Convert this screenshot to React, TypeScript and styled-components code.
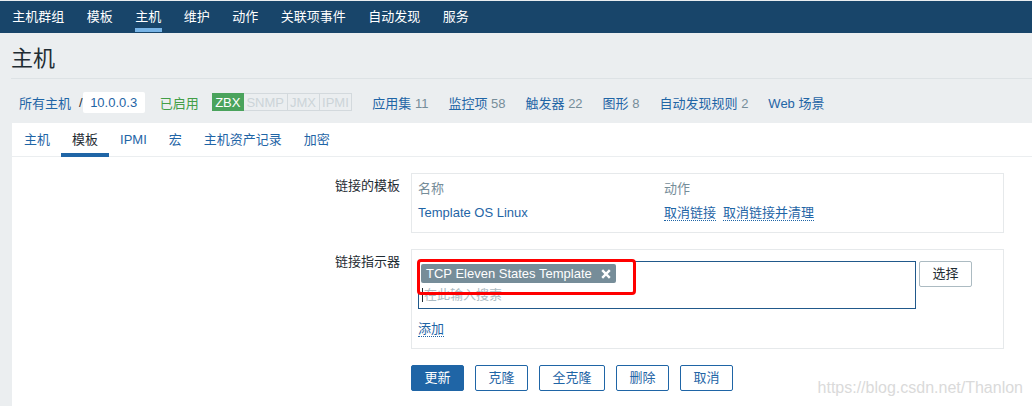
import React from 'react'
import styled, { createGlobalStyle } from 'styled-components'

const GlobalStyle = createGlobalStyle`
  body {
    margin: 0;
    background: #ebeef0;
    font-family: "Liberation Sans", Arial, "Noto Sans CJK SC", sans-serif;
    font-size: 13px;
    color: #1f2c33;
  }
  * { box-sizing: border-box; }
`

const Page = styled.div`
  position: relative;
  overflow: hidden;
`

const TopNav = styled.nav`
  display: flex;
  height: 33px;
  border-top: 1px solid #e9edf0;
  background: #18456a;
  padding-left: 1px;
`

const NavItem = styled.a<{ $active?: boolean }>`
  position: relative;
  padding: 0 11.25px;
  line-height: 32px;
  color: #fff;
  text-decoration: none;

  &::after {
    content: '';
    display: ${p => (p.$active ? 'block' : 'none')};
    position: absolute;
    left: 11px;
    right: 11px;
    bottom: 1px;
    height: 4px;
    background: #78b4e6;
  }
`

const Header = styled.header`
  margin-left: 11px;
  padding: 13px 0 6px;
  border-bottom: 1px solid #dde2e5;
`

const Title = styled.h1`
  margin: 0;
  font-size: 22px;
  font-weight: normal;
  line-height: 26px;
  color: #1f2c33;
`

const HostNav = styled.div`
  display: flex;
  align-items: center;
  height: 44px;
  padding: 2px 0 0 19px;
`

const Link = styled.a`
  color: #1f65a6;
  text-decoration: none;
  white-space: nowrap;
`

const Sep = styled.span`
  margin-left: 8px;
  color: #1f2c33;
`

const Current = styled.span`
  background: #fff;
  padding: 0 7.5px;
  line-height: 21px;
  border-radius: 2px;
  color: #1f65a6;
`

const Enabled = styled.span`
  margin-left: 15px;
  color: #429e47;
`

const Statuses = styled.div`
  display: flex;
  margin-left: 13px;
`

const Status = styled.span<{ $on?: boolean }>`
  padding: 1px 2.5px 0;
  line-height: 15px;
  border: 1px solid ${p => (p.$on ? '#4aa35c' : '#d3d9dd')};
  background: ${p => (p.$on ? '#4aa35c' : 'transparent')};
  color: ${p => (p.$on ? '#fff' : '#ccd4d8')};
  & + & {
    border-left: none;
  }
`

const HostLink = styled.span`
  margin-left: 20px;
`

const Count = styled.span`
  color: #768d99;
`

const Content = styled.main`
  margin-left: 12px;
  background: #fff;
  padding-bottom: 15px;
`

const Tabs = styled.div`
  display: flex;
  padding-left: 1px;
  border-bottom: 1px solid #ebeef0;
`

const Tab = styled.a<{ $active?: boolean }>`
  position: relative;
  padding: 0 11px;
  line-height: 33px;
  color: ${p => (p.$active ? '#1f2c33' : '#1f65a6')};
  text-decoration: none;

  &::after {
    content: '';
    display: ${p => (p.$active ? 'block' : 'none')};
    position: absolute;
    left: 0;
    right: 0;
    bottom: -1px;
    height: 4px;
    background: #1f65a6;
  }
`

const Form = styled.div`
  display: grid;
  grid-template-columns: 388px 593px;
  column-gap: 11px;
  row-gap: 16px;
  padding-top: 16px;
`

const Label = styled.label`
  text-align: right;
  padding-top: 5px;
  line-height: 16px;
`

const FieldBox = styled.div<{ $pad: string }>`
  border: 1px solid #e6e9eb;
  padding: ${p => p.$pad};
`

const LinkedTable = styled.div`
  display: grid;
  grid-template-columns: 246px auto;
  line-height: 24px;
`

const Th = styled.div`
  color: #768d99;
`

const Action = styled.a`
  color: #1f65a6;
  text-decoration: none;
  border-bottom: 1px dotted #1f65a6;
  margin-right: 7px;
`

const SelectRow = styled.div`
  display: flex;
  align-items: flex-start;
  gap: 3px;
`

const Multiselect = styled.div`
  position: relative;
  width: 498px;
  height: 48px;
  border: 1px solid #21598b;
  padding: 2px;
`

const Chip = styled.span`
  display: inline-flex;
  align-items: center;
  height: 19px;
  padding: 0 5px;
  border-radius: 2px;
  background: #768d99;
  color: #fff;
  line-height: 19px;

  & svg {
    margin-left: 9px;
  }
`

const Search = styled.div`
  display: flex;
  align-items: center;
  margin-top: 3px;
  padding-left: 1px;
  line-height: 18px;
  color: #acbbc2;

  &::before {
    content: '';
    width: 1px;
    height: 14px;
    margin-right: 1px;
    background: #1f2c33;
  }
`

const Highlight = styled.div`
  position: absolute;
  left: -2px;
  top: -3px;
  width: 219px;
  height: 36px;
  border: 3px solid #ff0000;
  border-radius: 4px;
  pointer-events: none;
`

const Button = styled.button<{ $variant?: 'main' | 'alt' | 'grey' }>`
  height: 26px;
  padding: 0 12.5px;
  border-radius: 2px;
  font: inherit;
  line-height: 24px;
  cursor: pointer;
  border: 1px solid ${p => (p.$variant === 'grey' ? '#acbbc2' : '#1f65a6')};
  background: ${p => (p.$variant === 'main' ? '#1f65a6' : '#fff')};
  color: ${p =>
    p.$variant === 'main' ? '#fff' : p.$variant === 'grey' ? '#1f2c33' : '#1f65a6'};
`

const AddRow = styled.div`
  margin-top: 8px;
  line-height: 24px;
`

const Buttons = styled.div`
  grid-column: 2;
  display: flex;
  gap: 11px;
`

const Watermark = styled.div`
  position: absolute;
  right: 9px;
  bottom: 9px;
  font-size: 16px;
  line-height: 18px;
  color: #dadada;
  pointer-events: none;
`

const topItems = ['主机群组', '模板', '主机', '维护', '动作', '关联项事件', '自动发现', '服务']
const hostLinks: [string, string][] = [
  ['应用集', '11'],
  ['监控项', '58'],
  ['触发器', '22'],
  ['图形', '8'],
  ['自动发现规则', '2'],
  ['Web 场景', ''],
]
const tabs = ['主机', '模板', 'IPMI', '宏', '主机资产记录', '加密']

const CloseIcon = () => (
  <svg width="10" height="10" viewBox="0 0 10 10">
    <path d="M1.2 1.2 L8.8 8.8 M8.8 1.2 L1.2 8.8" stroke="#fff" strokeWidth="2.4" />
  </svg>
)

export default function App() {
  return (
    <Page>
      <GlobalStyle />
      <TopNav>
        {topItems.map(t => (
          <NavItem key={t} $active={t === '主机'}>{t}</NavItem>
        ))}
      </TopNav>

      <Header>
        <Title>主机</Title>
      </Header>

      <HostNav>
        <Link>所有主机</Link>
        <Sep>/</Sep>
        <Current>10.0.0.3</Current>
        <Enabled>已启用</Enabled>
        <Statuses>
          <Status $on>ZBX</Status>
          <Status>SNMP</Status>
          <Status>JMX</Status>
          <Status>IPMI</Status>
        </Statuses>
        {hostLinks.map(([name, n]) => (
          <HostLink key={name}>
            <Link>{name}</Link>
            {n && <Count> {n}</Count>}
          </HostLink>
        ))}
      </HostNav>

      <Content>
        <Tabs>
          {tabs.map(t => (
            <Tab key={t} $active={t === '模板'}>{t}</Tab>
          ))}
        </Tabs>

        <Form>
          <Label>链接的模板</Label>
          <FieldBox $pad="3px 6px 7px">
            <LinkedTable>
              <Th>名称</Th>
              <Th>动作</Th>
              <Link>Template OS Linux</Link>
              <div>
                <Action>取消链接</Action>
                <Action>取消链接并清理</Action>
              </div>
            </LinkedTable>
          </FieldBox>

          <Label>链接指示器</Label>
          <FieldBox $pad="11px 6px 7px">
            <SelectRow>
              <Multiselect>
                <Chip>
                  TCP Eleven States Template
                  <CloseIcon />
                </Chip>
                <Search>在此输入搜索</Search>
                <Highlight />
              </Multiselect>
              <Button $variant="grey">选择</Button>
            </SelectRow>
            <AddRow>
              <Action>添加</Action>
            </AddRow>
          </FieldBox>

          <Buttons>
            <Button $variant="main">更新</Button>
            <Button $variant="alt">克隆</Button>
            <Button $variant="alt">全克隆</Button>
            <Button $variant="alt">删除</Button>
            <Button $variant="alt">取消</Button>
          </Buttons>
        </Form>
      </Content>

      <Watermark>https://blog.csdn.net/Thanlon</Watermark>
    </Page>
  )
}
